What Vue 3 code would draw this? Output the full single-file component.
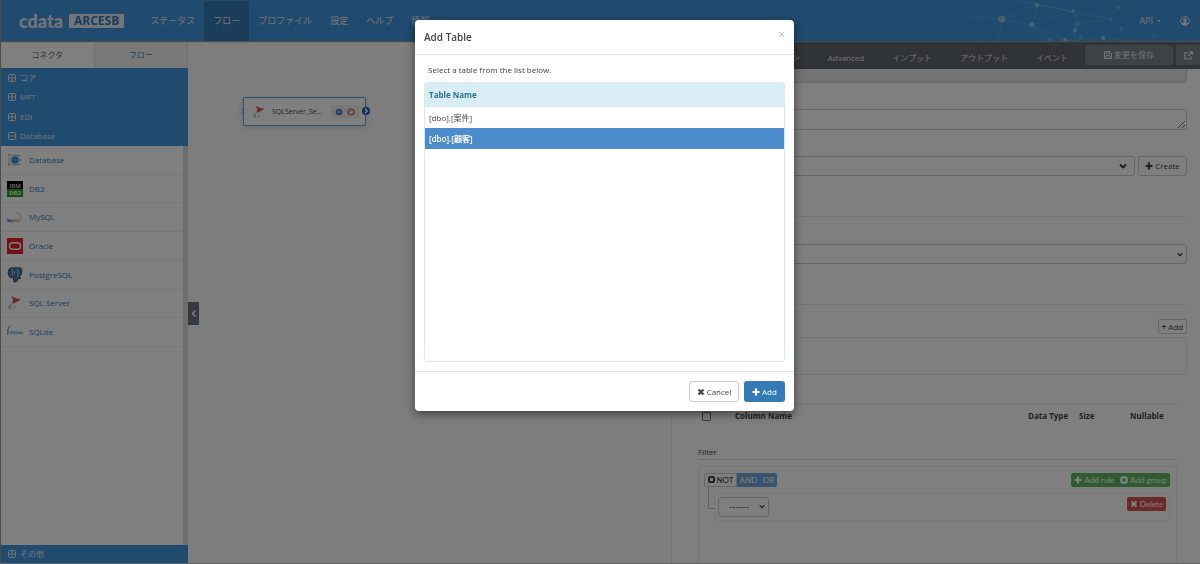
<template>
  <div class="page">
    <header class="topbar">
      <svg class="network" viewBox="0 0 200 41" aria-hidden="true">
        <path
          d="M32 19 67 5M32 19 62 25 67 5 103 11 62 25 95 40M62 25 74 41M62 25 80 41M32 19 10 41M32 19 29 41M32 19 0 17M32 19 2 0M67 5 45 0M67 5 141 19M107 24 141 19M105 30V41M95 40 105 30M133 38 95 41M133 38 160 41M103 11 107 24"
        />
        <circle v-for="(dot, i) in dots" :key="i" :cx="dot[0]" :cy="dot[1]" :r="dot[2]" :class="dot[3]" />
      </svg>
      <a class="brand" href="#"><span class="brand-name">cdata</span><span class="brand-tag">ARCESB</span></a>
      <nav class="menu">
        <a v-for="item in menu" :key="item" href="#" :class="{ active: item === 'フロー' }">{{ item }}</a>
      </nav>
      <div class="account">
        <a href="#">API <i class="caret"></i></a>
        <a href="#" aria-label="User">
          <svg width="10" height="10" viewBox="0 0 16 16">
            <circle cx="8" cy="8" r="7" fill="none" stroke="currentColor" stroke-width="1.6" />
            <circle cx="8" cy="6.4" r="3" fill="currentColor" />
            <path d="M2.5 12.5Q4 9.500 8 9.500t5.500 3Q8 17.500 2.500 12.500z" fill="currentColor" />
          </svg>
        </a>
      </div>
    </header>

    <main class="workspace">
      <aside class="sidebar">
        <div class="side-tabs">
          <button type="button" class="current">コネクタ</button>
          <button type="button">フロー</button>
        </div>
        <div class="groups">
          <button v-for="group in groups" :key="group.name" type="button" class="group">
            <svg width="8" height="8" viewBox="0 0 8 8">
              <rect x="0.5" y="0.5" width="7" height="7" rx="1" />
              <path :d="group.open ? 'M1 4h6' : 'M1 4h6M4 1v6'" />
            </svg>
            {{ group.name }}
          </button>
        </div>
        <div class="connector-pane">
          <div class="connectors">
            <a v-for="c in connectors" :key="c" href="#" class="connector">
              <svg width="16" height="16" viewBox="0 0 16 16">
                <g v-if="c === 'Database'">
                  <path d="M3 3q5-2 10 0v10q-5 2-10 0z" fill="#e4e7ea" />
                  <path d="M5 3.500h8M1 8h3M12 8h3M5 12.500h8M2 5v2M2 10v2" stroke="#8fb5d6" stroke-width="0.8" />
                  <circle cx="2" cy="3" r="1" fill="#8fb5d6" />
                  <circle cx="2" cy="13" r="1" fill="#8fb5d6" />
                  <circle cx="8" cy="8" r="3.500" fill="#2c8ad8" />
                  <path d="M6 8h4" stroke="#90c0e8" />
                </g>
                <g v-else-if="c === 'DB2'">
                  <path d="M0 0h16v8H0z" fill="#000" />
                  <path d="M0 8h16v8H0z" fill="#2a9d24" />
                  <text x="8" y="7" class="logo-text" fill="#bbb">IBM</text>
                  <text x="8" y="14" class="logo-text" fill="#e8ffe8">DB2</text>
                </g>
                <g v-else-if="c === 'MySQL'">
                  <text x="0" y="13" class="logo-small" fill="#4b6480">My<tspan fill="#e08a30">SQL</tspan></text>
                  <path d="M9 3q4 1 4.500 5l1.500 2" fill="none" stroke="#9babba" stroke-width="0.7" />
                </g>
                <g v-else-if="c === 'Oracle'">
                  <path d="M0 0h16v16H0z" fill="#e8212b" />
                  <rect x="2.500" y="4.800" width="11" height="6.400" rx="3.200" fill="none" stroke="#fff" stroke-width="1.400" />
                </g>
                <g v-else-if="c === 'PostgreSQL'">
                  <path
                    d="M2 2q2-2 5-1 2-1 4 0 4-1 4 3 0 4-3 6l2 1-3 1q-1 4-4 3l-1-5q-3 2-4-1-2-4 0-7z"
                    fill="#3f77b3"
                    stroke="#444"
                    stroke-width="0.8"
                  />
                  <path d="M5.500 2q-1 4 0 7M10.500 2q1 3 0 8M7.500 4v3" fill="none" stroke="#d8e4f0" stroke-width="0.8" />
                </g>
                <ServerMark v-else-if="c === 'SQL Server'" />
                <g v-else>
                  <path d="M4 1Q0 3 0 9l1-2q1-4 3-6z" fill="#1c7fc8" />
                  <path d="M.5 11 1.500 7" stroke="#0d5a94" stroke-width="0.6" />
                  <text x="3" y="10" class="logo-small" fill="#3e8fc8">SQLite</text>
                </g>
              </svg>
              {{ c }}
            </a>
          </div>
        </div>
        <button type="button" class="group last">
          <svg width="8" height="8" viewBox="0 0 8 8">
            <rect x="0.5" y="0.5" width="7" height="7" rx="1" />
            <path d="M1 4h6M4 1v6" />
          </svg>
          その他
        </button>
      </aside>

      <section class="canvas">
        <button type="button" class="collapse" aria-label="Collapse">
          <svg width="4" height="7" viewBox="0 0 4 7"><path d="M3.500.5l-3 3 3 3" /></svg>
        </button>
        <div class="node">
          <i class="port in">
            <svg width="8" height="8" viewBox="0 0 8 8"><path d="M3 2l2 2-2 2" /></svg>
          </i>
          <svg width="14" height="14" viewBox="0 0 16 16"><ServerMark /></svg>
          <span class="node-name">SQLServer_Se...</span>
          <span class="node-tools">
            <svg width="8" height="8" viewBox="0 0 8 8">
              <path d="M4 .5v7M.5 4h7M1.500 1.500l5 5M6.500 1.500l-5 5" stroke="#2a6fc0" stroke-width="1.200" />
              <circle cx="4" cy="4" r="1.800" fill="#fff" stroke="#2a6fc0" stroke-width="1.600" />
            </svg>
            <svg width="8" height="8" viewBox="0 0 8 8" fill="none" stroke="#c2543c">
              <circle cx="4" cy="4" r="3" stroke-width="1.200" />
              <path d="M2.500 2.500 4 4" />
            </svg>
          </span>
          <i class="port out">
            <svg width="8" height="8" viewBox="0 0 8 8"><path d="M3 1.800 5.200 4 3 6.200" /></svg>
          </i>
        </div>
      </section>

      <section class="panel">
        <div class="panel-bar">
          <nav class="panel-tabs">
            <a v-for="tab in tabs" :key="tab" href="#">{{ tab }}</a>
          </nav>
          <button type="button" class="save">
            <svg width="8" height="8" viewBox="0 0 8 8" fill="none" stroke="currentColor">
              <path d="M.5.5h5l2 2v5h-7zM2.500.5v2h3v-2M2 7.500v-3h4v3" />
            </svg>
            変更を保存
          </button>
          <button type="button" class="popout" aria-label="Open">
            <svg width="9" height="9" viewBox="0 0 9 9" fill="none" stroke="currentColor" stroke-width="1.200">
              <path d="M4 1.500H1v6.500h6V5.500M5.500.8h2.800v2.800M8 1 3.800 5.200" />
            </svg>
          </button>
        </div>

        <div class="settings">
          <input class="field readonly" type="text" readonly aria-label="ID" />
          <textarea class="field notes" aria-label="Description"></textarea>
          <div class="connection">
            <select class="field" aria-label="Connection"></select>
            <button type="button" class="create"><PlusMark /> Create</button>
          </div>
          <hr class="after-connection" />
          <select class="field action" aria-label="Action"></select>
          <hr class="after-action" />
          <button type="button" class="add-small"><b>+</b> Add</button>
          <div class="table-box"></div>

          <div class="details">
            <table class="columns">
              <thead>
                <tr>
                  <th class="pick"><input type="checkbox" aria-label="Select all" /></th>
                  <th class="name">Column Name</th>
                  <th class="type">Data Type</th>
                  <th class="size">Size</th>
                  <th>Nullable</th>
                </tr>
              </thead>
            </table>
            <h3>Filter</h3>
            <div class="builder">
              <div class="builder-head">
                <div class="conditions">
                  <button type="button" class="not"><i></i>NOT</button>
                  <button type="button" class="and">AND</button>
                  <button type="button" class="or">OR</button>
                </div>
                <div class="adders">
                  <button type="button"><PlusMark /> Add rule</button>
                  <button type="button">
                    <svg width="8" height="8" viewBox="0 0 8 8">
                      <circle cx="4" cy="4" r="4" fill="#fff" />
                      <path d="M4 2v4M2 4h4" stroke="#5cb85c" stroke-width="1.400" />
                    </svg>
                    Add group
                  </button>
                </div>
              </div>
              <div class="rule">
                <select class="field" aria-label="Rule column">
                  <option>------</option>
                </select>
                <button type="button" class="delete"><CrossMark /> Delete</button>
              </div>
            </div>
          </div>
        </div>
      </section>
    </main>

    <div class="backdrop">
      <div class="modal" role="dialog" aria-labelledby="modal-title">
        <div class="modal-head">
          <h2 id="modal-title">Add Table</h2>
          <button type="button" class="close" aria-label="Close">×</button>
        </div>
        <div class="modal-body">
          <p>Select a table from the list below.</p>
          <div class="list">
            <table>
              <thead>
                <tr>
                  <th>Table Name</th>
                </tr>
              </thead>
              <tbody>
                <tr v-for="table in tables" :key="table" :class="{ selected: selected === table }" @click="selected = table">
                  <td>{{ table }}</td>
                </tr>
              </tbody>
            </table>
          </div>
        </div>
        <div class="modal-foot">
          <button type="button" class="cancel"><CrossMark /> Cancel</button>
          <button type="button" class="confirm"><PlusMark /> Add</button>
        </div>
      </div>
    </div>
  </div>
</template>

<script setup>
import { h, ref } from "vue";

const menu = ["ステータス", "フロー", "プロファイル", "設定", "ヘルプ", "情報"];
const tabs = ["コネクション", "Advanced", "インプット", "アウトプット", "イベント"];
const connectors = ["Database", "DB2", "MySQL", "Oracle", "PostgreSQL", "SQL Server", "SQLite"];
const groups = [
  { name: "コア", open: false },
  { name: "MFT", open: false },
  { name: "EDI", open: false },
  { name: "Database", open: true },
];
const tables = ["[dbo].[案件]", "[dbo].[顧客]"];
const selected = ref("[dbo].[顧客]");

// x, y, radius, tone
const dots = [
  [32, 19, 3.5, "bright"],
  [67, 5, 2.3, "bright"],
  [62, 25, 2.5, "bright"],
  [95, 40, 2.2, "bright"],
  [105, 30, 2.2, "bright"],
  [133, 38, 2.2, "bright"],
  [103, 11, 1.4, "bright"],
  [107, 24, 3, "blue"],
  [111, 37, 2.4, "blue"],
  [80, 40, 2.4, "blue"],
  [90, 8, 1.4, "blue"],
  [141, 19, 2, "blue"],
  [151, 29, 2, "blue"],
  [184, 36, 2.6, "faint"],
  [148, 7, 2.2, "dim"],
];

const PlusMark = () =>
  h("svg", { width: 8, height: 8, viewBox: "0 0 8 8" }, [
    h("path", { d: "M4 .5v7M.5 4h7", stroke: "currentColor", "stroke-width": 2.2 }),
  ]);

const CrossMark = () =>
  h("svg", { width: 8, height: 8, viewBox: "0 0 8 8" }, [
    h("path", { d: "M1.500 1.500l5 5M6.500 1.500l-5 5", stroke: "currentColor", "stroke-width": 2.2 }),
  ]);

const ServerMark = () =>
  h("g", [
    h("path", { d: "M4 1q4 2 10 3.500L8 8l-3 1 1.500-3.500z", fill: "#e0696c" }),
    h("path", { d: "M5 2l5 3M6 7l7-2.500M7 4 6 8", stroke: "#b8383c", "stroke-width": 0.8 }),
    h("path", { d: "M5 9q-5 1-4 4 1 2 5 2-3-2-1-5zM7 10l2 3-2 1", fill: "#c9c9c9" }),
  ]);
</script>

<style>
body {
  margin: 0;
}
</style>

<style scoped>
.page {
  display: flex;
  flex-direction: column;
  height: 100vh;
  overflow: hidden;
  box-sizing: border-box;
  border-left: 1px solid #999;
  border-bottom: 1px solid #ccc;
  font: 8px/12px "Open Sans", "Noto Sans CJK JP", sans-serif;
  color: #444;
  background: #fff;
}

.page * {
  box-sizing: border-box;
}

a {
  color: inherit;
  text-decoration: none;
}

button {
  display: inline-flex;
  align-items: center;
  justify-content: center;
  gap: 2px;
  margin: 0;
  padding: 0;
  border: 0;
  background: none;
  font: inherit;
  color: inherit;
  white-space: nowrap;
}

svg {
  flex: none;
}

/* top bar */
.topbar {
  position: relative;
  z-index: 1;
  display: flex;
  align-items: center;
  flex: none;
  height: 41px;
  padding: 0 10px 0 18px;
  background: #4094dc;
  box-shadow: 0 1px 1px #999;
  color: #e4ecf4;
  font-size: 9px;
}

.network {
  position: absolute;
  right: 30px;
  top: 0;
  width: 200px;
  height: 41px;
}

.network path {
  fill: none;
  stroke: #9cd0d8;
  stroke-width: 0.5;
  opacity: 0.55;
}

.bright {
  fill: #8cc4dc;
}

.blue {
  fill: #4cb0ec;
}

.dim {
  fill: #78a8cc;
}

.faint {
  fill: #4ca0e4;
}

.brand {
  display: flex;
  align-items: center;
  gap: 6px;
}

.brand-name {
  font: 900 18px/16px Lato, sans-serif;
}

.brand-tag {
  padding: 0 5px;
  border-radius: 1px;
  background: #e4ecf4;
  color: #347cbc;
  font: 700 12px/14px "Open Sans", sans-serif;
}

.menu {
  display: flex;
  margin-left: 17px;
}

.menu a {
  height: 40px;
  padding: 0 9px;
  line-height: 40px;
  white-space: nowrap;
}

.menu .active {
  background: #347ab6;
}

.account {
  position: relative;
  display: flex;
  align-items: center;
  gap: 19px;
  margin-left: auto;
}

.account a {
  display: flex;
  align-items: center;
  gap: 4px;
}

.caret {
  border: 2px solid transparent;
  border-top-color: currentColor;
  border-bottom: 0;
}

/* sidebar */
.workspace {
  display: flex;
  flex: 1;
  min-height: 0;
}

.sidebar {
  display: flex;
  flex-direction: column;
  flex: none;
  width: 187px;
}

.side-tabs {
  display: flex;
  height: 27px;
  background: #f1f1f1;
}

.side-tabs button {
  flex: 1;
  color: #337ab7;
  border-right: 1px solid #e0e0e0;
}

.side-tabs .current {
  background: #fff;
  color: #666;
}

.groups {
  display: grid;
  grid-auto-rows: 1fr;
  height: 78px;
}

.group {
  justify-content: flex-start;
  gap: 4px;
  padding: 0 7px;
  background: #4094dc;
  color: #e4ecf4;
}

.group svg {
  fill: none;
  stroke: currentColor;
}

.last {
  height: 18px;
}

.connector-pane {
  flex: 1;
  min-height: 0;
  border-right: 5px solid #dcdcdc;
}

.connectors {
  display: grid;
  grid-auto-rows: 1fr;
  height: 201px;
}

.connector {
  display: flex;
  align-items: center;
  gap: 6px;
  padding: 0 6px;
  border-bottom: 1px solid #f0f0f0;
  color: #337ab7;
}

.logo-text {
  font: 700 6px "Open Sans", sans-serif;
  text-anchor: middle;
}

.logo-small {
  font: 700 4px "Open Sans", sans-serif;
}

/* canvas */
.canvas {
  position: relative;
  flex: 1;
  background: #fbfbfb;
}

.collapse {
  position: absolute;
  left: 0;
  top: 261px;
  width: 11px;
  height: 23px;
  background: #6a747e;
  color: #fff;
}

.collapse path,
.port path {
  fill: none;
  stroke: #fff;
  stroke-width: 1.5;
}

.node {
  position: absolute;
  left: 55px;
  top: 56px;
  display: flex;
  align-items: center;
  width: 123px;
  height: 29px;
  padding: 0 6px 0 8px;
  border: 1px solid #5a9fe0;
  border-radius: 2px;
  background: #fff;
  box-shadow: 0 2px 6px rgba(0, 0, 0, 0.15);
}

.node-name {
  margin-left: 6px;
  font-size: 7px;
}

.node-tools {
  display: flex;
  align-items: center;
  justify-content: space-evenly;
  width: 28px;
  height: 13px;
  margin-left: auto;
  border-radius: 2px;
  background: #efefef;
}

.port {
  position: absolute;
  display: flex;
  top: 9px;
  width: 8px;
  height: 8px;
  border-radius: 50%;
}

.in {
  left: -5px;
  outline: 1px dotted #ccc;
  outline-offset: -1px;
}

.in path {
  stroke: #777;
  stroke-width: 1;
}

.out {
  right: -5px;
  background: #1c5fb0;
}

/* right panel */
.panel {
  display: flex;
  flex-direction: column;
  flex: none;
  width: 529px;
  border-left: 1px solid #ececec;
}

.panel-bar {
  display: flex;
  align-items: center;
  justify-content: flex-end;
  flex: none;
  height: 28px;
  gap: 3px;
  background: #60686e;
  color: #e4e4e4;
}

.panel-tabs {
  display: flex;
  gap: 28px;
  margin: 5px 14px 0 0;
}

.save,
.popout {
  height: 20px;
  border-radius: 2px;
  background: #7a848e;
}

.save {
  width: 88px;
}

.popout {
  width: 24px;
}

.settings {
  display: flex;
  flex-direction: column;
  flex: 1;
  min-height: 0;
  overflow: hidden;
  padding: 0 13px 0 26px;
}

.settings > * {
  flex: none;
}

.field {
  width: 100%;
  height: 20px;
  margin: 0;
  border: 1px solid #ccc;
  border-radius: 3px;
  background: #fff;
  font: inherit;
  color: inherit;
}

select.field {
  appearance: none;
  background: #fff url("data:image/svg+xml,%3Csvg xmlns='http://www.w3.org/2000/svg' viewBox='0 0 8 6'%3E%3Cpath d='M1 1.500 4 4.500 7 1.500' fill='none' stroke='%23333' stroke-width='1.800'/%3E%3C/svg%3E") no-repeat right 3px center / 6px 5px;
}

.connection select.field {
  background-position: right 7px center;
  background-size: 8px 6px;
}

.settings .readonly {
  height: 14px;
  border-top: 0;
  border-radius: 0 0 3px 3px;
  background: #e6e6e6;
}

.notes {
  height: 21px;
  margin: 26px 0;
}

.connection {
  display: flex;
  gap: 3px;
}

.create {
  flex: none;
  width: 49px;
  border: 1px solid #ccc;
  border-radius: 3px;
}

hr {
  width: 100%;
  margin: 0;
  border: 0;
  border-top: 1px solid #ececec;
}

.after-connection {
  margin: 40px 0 27px;
}

.after-action {
  margin: 40px 0 14px;
}

.add-small {
  align-self: flex-end;
  width: 29px;
  height: 15px;
  border: 1px solid #ccc;
  border-radius: 2px;
}

.table-box {
  height: 38px;
  margin: 3px 0 28px;
  border: 1px solid #ececec;
  border-radius: 3px;
}

.details {
  margin-right: 10px;
}

.columns {
  width: 100%;
  border-collapse: collapse;
  border-top: 1px solid #ececec;
  table-layout: fixed;
}

.columns th {
  height: 25px;
  padding: 0;
  text-align: left;
}

.pick {
  width: 37px;
}

.columns .pick {
  padding-left: 4px;
}

.pick input {
  appearance: none;
  display: block;
  width: 9px;
  height: 9px;
  margin: 0;
  border: 1px solid #777;
  border-radius: 1px;
}

.type,
.size {
  width: 51px;
}

.columns th:last-child {
  width: 47px;
}

.details h3 {
  margin: 16px 0 6px;
  border-bottom: 1px solid #ddd;
  font-size: 8px;
  font-weight: 500;
  line-height: 14px;
}

.builder {
  height: 110px;
  padding: 6px 6px 6px 5px;
  border: 1px solid #ececec;
  border-radius: 3px;
  font-family: Lato, sans-serif;
}

.builder-head {
  display: flex;
  justify-content: space-between;
}

.builder button {
  height: 14px;
}

.conditions,
.adders {
  display: flex;
  overflow: hidden;
  border-radius: 2px;
}

.conditions button {
  background: #6ea8dc;
  color: #e0ecf8;
  font-weight: 700;
}

.conditions .not {
  width: 33px;
  border: 1px solid #ccc;
  background: #fff;
  color: #333;
  font-weight: 400;
}

.conditions .and {
  width: 23px;
}

.conditions .or {
  width: 17px;
}

.not i {
  width: 7px;
  height: 7px;
  border: 2px solid #444;
  border-radius: 2px;
}

.adders button {
  padding: 0 3px;
  background: #5cb85c;
  color: #fff;
}

.rule {
  position: relative;
  display: flex;
  justify-content: space-between;
  margin: 6px 0 0 10px;
  padding: 3px;
  border: 1px solid #f2f2f2;
  border-radius: 3px;
}

.rule::before {
  content: "";
  position: absolute;
  left: -7px;
  top: -8px;
  width: 6px;
  height: 22px;
  border: solid #bbb;
  border-width: 0 0 1px 1px;
  border-radius: 0 0 0 2px;
}

.rule .field {
  width: 51px;
  padding-left: 10px;
  font-size: 9px;
}

.delete {
  width: 39px;
  border-radius: 2px;
  background: #d9534f;
  color: #fff;
}

/* dialog */
.backdrop {
  position: fixed;
  inset: 0;
  z-index: 10;
  padding: 20px 0 0 9px;
  background: rgba(0, 0, 0, 0.5);
}

.modal {
  width: 379px;
  margin: 0 auto;
  border-radius: 4px;
  background: #fff;
  box-shadow: 0 3px 10px rgba(0, 0, 0, 0.5);
}

.modal-head {
  display: flex;
  align-items: center;
  justify-content: space-between;
  height: 35px;
  padding: 0 9px;
  border-bottom: 1px solid #e5e5e5;
}

.modal-head h2 {
  margin: 0;
  font-size: 10px;
  font-weight: 600;
  line-height: 16px;
}

.close {
  align-self: flex-start;
  margin-top: 9px;
  color: #bbb;
  font-size: 12px;
}

.modal-body {
  padding: 9px;
}

.modal-body p {
  margin: 0 0 6px;
  padding: 0 4px;
}

.list {
  height: 280px;
  border: 1px solid #d0edf7;
  border-radius: 3px;
}

.list table {
  width: 100%;
  border-collapse: collapse;
}

.list th {
  height: 24px;
  padding: 0 4px;
  background: #d9edf7;
  color: #31708f;
  text-align: left;
}

.list td {
  height: 21px;
  padding: 0 4px;
}

.list .selected {
  background: #4d8ccc;
  color: #fff;
  font-weight: 600;
}

.modal-foot {
  display: flex;
  justify-content: flex-end;
  gap: 5px;
  padding: 9px;
  border-top: 1px solid #e5e5e5;
}

.modal-foot button {
  height: 21px;
  border-radius: 3px;
}

.cancel {
  width: 50px;
  border: 1px solid #ccc;
}

.modal-foot .confirm {
  width: 41px;
  background: #337ab7;
  color: #fff;
}
</style>
